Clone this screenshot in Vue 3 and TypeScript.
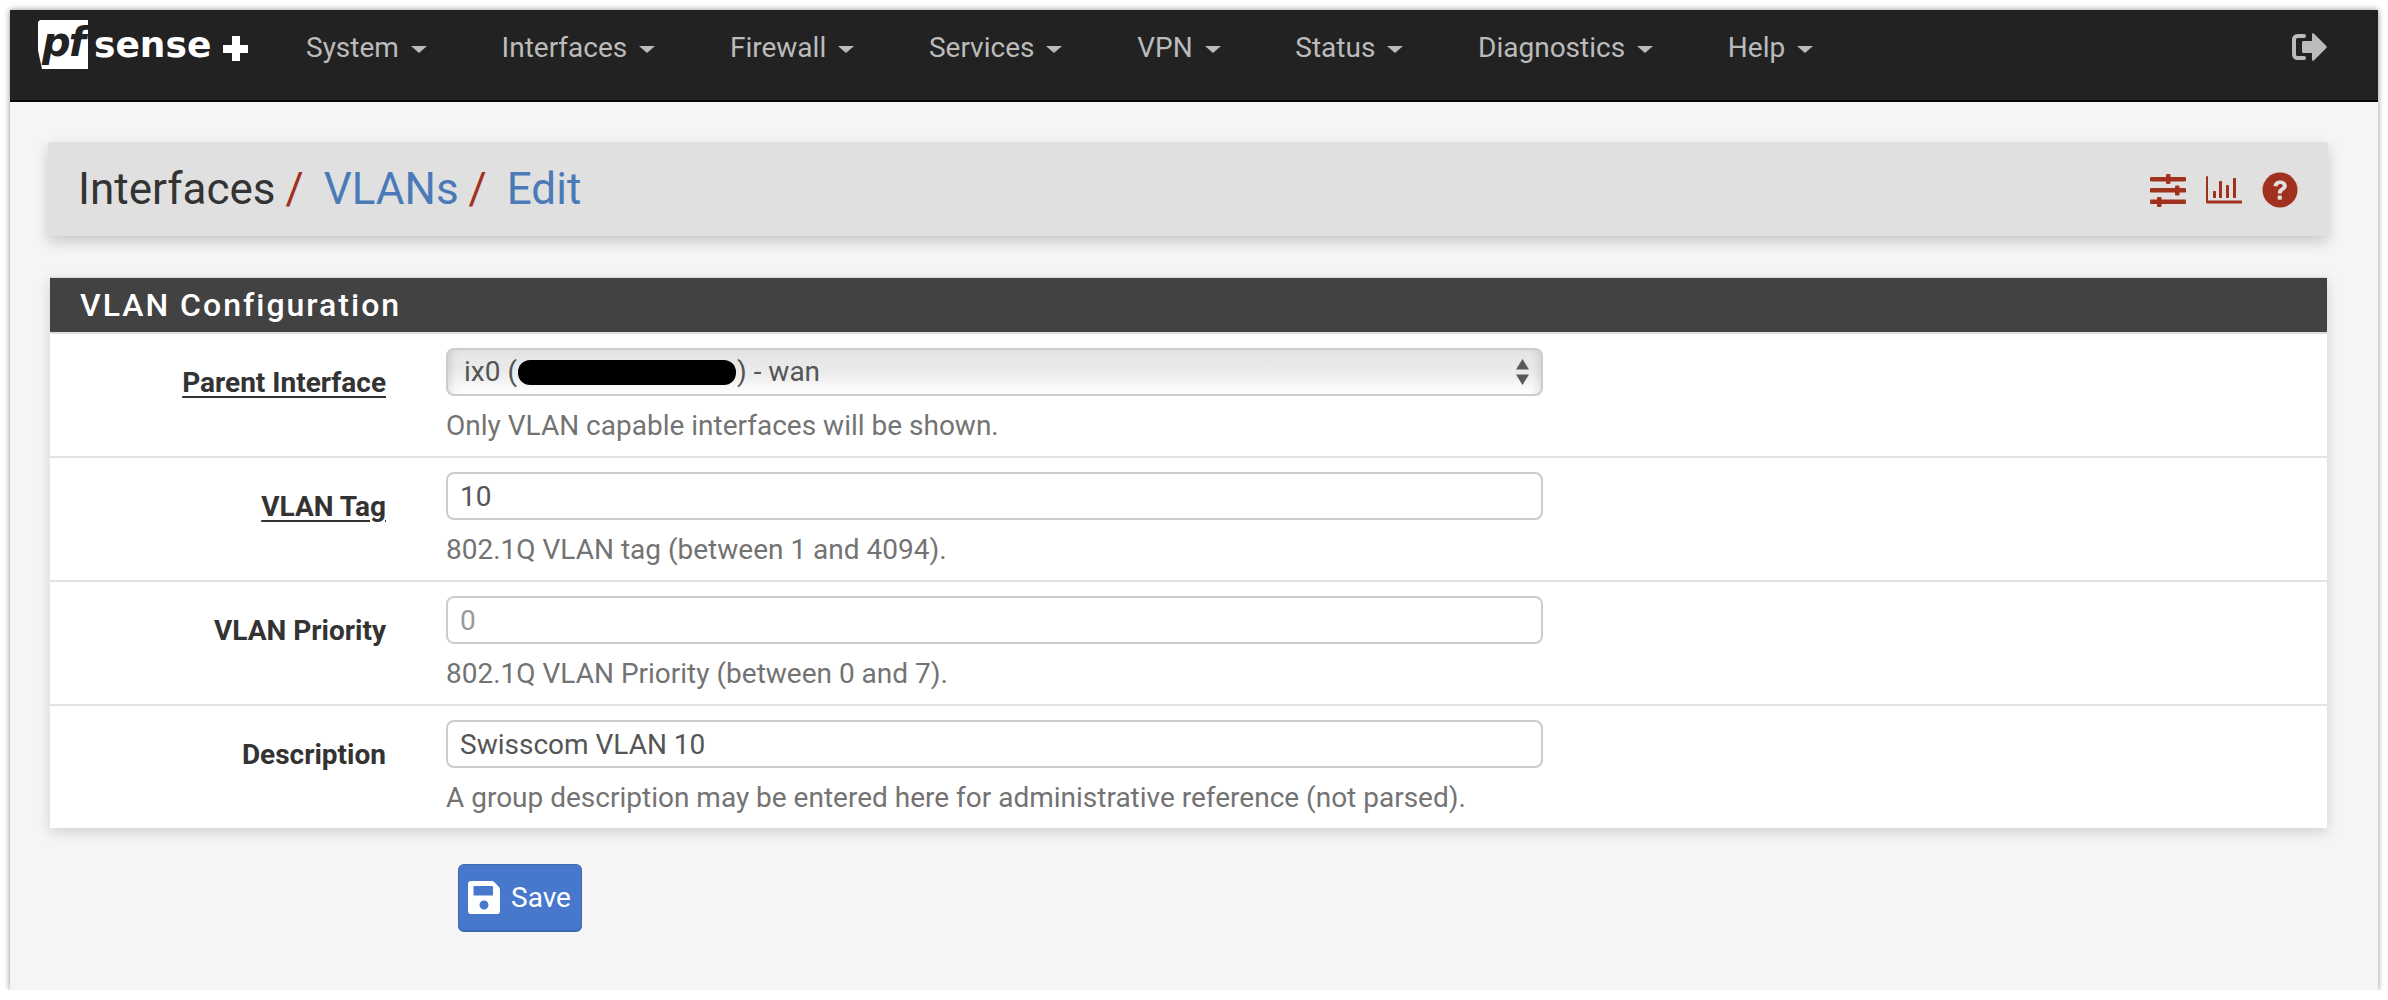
<script setup lang="ts">
interface Row {
  label: string
  underline: boolean
  help: string
  value?: string
  placeholder?: string
  isSelect?: boolean
}

const menu = ['System', 'Interfaces', 'Firewall', 'Services', 'VPN', 'Status', 'Diagnostics', 'Help']

const rows: Row[] = [
  { label: 'Parent Interface', underline: true, isSelect: true, help: 'Only VLAN capable interfaces will be shown.' },
  { label: 'VLAN Tag', underline: true, value: '10', help: '802.1Q VLAN tag (between 1 and 4094).' },
  { label: 'VLAN Priority', underline: false, placeholder: '0', help: '802.1Q VLAN Priority (between 0 and 7).' },
  {
    label: 'Description',
    underline: false,
    value: 'Swisscom VLAN 10',
    help: 'A group description may be entered here for administrative reference (not parsed).'
  }
]
</script>

<template>
  <div class="window">
    <nav class="navbar">
      <a class="logo" href="#" aria-label="pfSense Plus">
        <span class="logo-box"><span class="logo-pf">pf</span></span>
        <span class="logo-sense">sense</span>
        <span class="logo-plus" aria-hidden="true"></span>
      </a>
      <ul class="menu">
        <li v-for="item in menu" :key="item" class="menu-item">
          {{ item }}<span class="caret"></span>
        </li>
      </ul>
      <svg class="logout" viewBox="0 0 36 28" aria-label="Logout">
        <path d="M13 3H6.500A3.500 3.500 0 0 0 3 6.500v15A3.500 3.500 0 0 0 6.500 25H13" fill="none" stroke="#bbb" stroke-width="4" stroke-linecap="round" />
        <path d="M21 1.200c0-1 1-1.400 1.800-.7L35.300 13a1.400 1.400 0 0 1 0 2L22.800 27.500c-.8.700-1.800.3-1.800-.7V20h-8.500A1.500 1.500 0 0 1 11 18.500v-9A1.500 1.500 0 0 1 12.500 8H21z" fill="#bbb" />
      </svg>
    </nav>

    <main class="content">
      <header class="crumbs">
        <h1 class="crumb-title">
          <span>Interfaces</span><span class="sep">/</span>
          <a href="#">VLANs</a><span class="sep">/</span>
          <a href="#">Edit</a>
        </h1>
        <div class="crumb-icons">
          <svg class="ic-sliders" viewBox="0 0 36 33" aria-label="Settings">
            <g fill="#a1301f">
              <rect y="3" width="36" height="4.500" rx="1.200" />
              <rect y="14" width="36" height="4.500" rx="1.200" />
              <rect y="25.500" width="36" height="4.500" rx="1.200" />
              <rect x="16" width="4.500" height="10" rx="1.200" />
              <rect x="25" y="11.500" width="4.500" height="10" rx="1.200" />
              <rect x="7" y="23" width="4.500" height="10" rx="1.200" />
            </g>
          </svg>
          <svg class="ic-chart" viewBox="0 0 36 28" aria-label="Status">
            <g fill="#a1301f">
              <path d="M0 1a1 1 0 0 1 2 0v23.500h33a1.500 1.500 0 0 1 0 3H1.500A1.500 1.500 0 0 1 0 26z" />
              <rect x="7" y="15" width="3" height="7" rx=".6" />
              <rect x="13" y="5" width="3" height="17" rx=".6" />
              <rect x="20" y="9" width="3" height="13" rx=".6" />
              <rect x="27" y="2" width="3" height="20" rx=".6" />
            </g>
          </svg>
          <svg class="ic-help" viewBox="0 0 36 36" aria-label="Help">
            <circle cx="18" cy="18" r="17.500" fill="#a1301f" />
            <path d="M11.500 14c.3-3.600 3-5.600 6.700-5.600 3.800 0 6.600 2.200 6.600 5.400 0 2.500-1.500 3.700-3.100 4.700-1.300.8-1.900 1.400-1.900 2.900h-4c0-3 1.100-4.300 2.900-5.400 1.200-.7 2-1.300 2-2.200 0-1-1-1.700-2.400-1.700-1.600 0-2.500.9-2.800 2.300z" fill="#e0e0e0" />
            <rect x="15.700" y="23.500" width="4.100" height="4.300" rx=".8" fill="#e0e0e0" />
          </svg>
        </div>
      </header>

      <section class="panel">
        <h2 class="panel-heading">VLAN Configuration</h2>
        <div v-for="row in rows" :key="row.label" class="form-row">
          <label class="form-label" :class="{ required: row.underline }">{{ row.label }}</label>
          <div class="form-field">
            <div v-if="row.isSelect" class="select" role="combobox">
              <span class="select-text">ix0 (<span class="redacted"></span>) - wan</span>
              <svg class="select-arrows" viewBox="0 0 13 26" aria-hidden="true">
                <path d="M6.500 0 13 10.500H0zM0 15.500h13L6.500 26z" fill="#595959" />
              </svg>
            </div>
            <input v-else class="input" type="text" :value="row.value" :placeholder="row.placeholder" />
            <p class="help">{{ row.help }}</p>
          </div>
        </div>
      </section>

      <div class="actions">
        <button class="btn-save" type="button">
          <svg class="ic-save" viewBox="0 0 32 33" aria-hidden="true">
            <path fill-rule="evenodd" fill="#fff" d="M3 0h20.500c1 0 2 .4 2.700 1.100l4.700 5c.7.700 1.100 1.700 1.100 2.700V30a3 3 0 0 1-3 3H3a3 3 0 0 1-3-3V3a3 3 0 0 1 3-3zm2.500 5v9.500h19.500V6c0-.6-.4-1-1-1zM16 19.500a4.500 4.500 0 1 0 0 9 4.500 4.500 0 0 0 0-9z" />
          </svg>
          Save
        </button>
      </div>
    </main>
  </div>
</template>

<style>
html, body { background: #fff; }
</style>

<style scoped>
.window {
  box-sizing: border-box;
  width: 2368px;
  height: 980px;
  margin: 10px 0 0 10px;
  background: #f5f5f5;
  box-shadow: 0 0 6px rgba(0, 0, 0, .45);
  font-family: Roboto, "Liberation Sans", sans-serif;
  color: #333;
}
.navbar {
  box-sizing: border-box;
  height: 92px;
  display: flex;
  align-items: flex-start;
  background: #222;
  border-bottom: 2px solid #080808;
  padding: 10px 51px 0 28px;
}
.logo {
  display: flex;
  align-items: flex-start;
  width: 268px;
  flex: none;
  color: #fff;
  text-decoration: none;
}
.logo-box {
  width: 50px;
  height: 49px;
  flex: none;
  background: #fff;
  clip-path: polygon(0 4%, 4% 0, 100% 0, 100% 100%, 8% 100%, 0 62%);
  display: flex;
  align-items: center;
}
.logo-pf {
  font: italic 700 40px/40px "DejaVu Sans", sans-serif;
  color: #222;
  margin: -6px 0 0 4px;
  letter-spacing: -2px;
}
.logo-sense {
  font: 700 36px/46px "DejaVu Sans", sans-serif;
  margin: 2px 0 0 6px;
}
.logo-plus {
  width: 25px;
  height: 25px;
  margin: 16px 0 0 12px;
  background:
    linear-gradient(#fff, #fff) center / 100% 8px no-repeat,
    linear-gradient(#fff, #fff) center / 8px 100% no-repeat;
}
.menu {
  display: flex;
  gap: 74.700px;
  list-style: none;
  margin: 0;
  padding: 0;
  flex: 1;
}
.menu-item {
  font-size: 28px;
  line-height: 55px;
  color: #bbb;
  white-space: nowrap;
}
.caret {
  display: inline-block;
  margin-left: 12px;
  vertical-align: middle;
  border-top: 7px solid #bbb;
  border-left: 8px solid transparent;
  border-right: 8px solid transparent;
}
.logout {
  width: 36px;
  height: 28px;
  margin-top: 13px;
  flex: none;
}
.content {
  padding: 40px 50px 0 38px;
}
.crumbs {
  box-sizing: border-box;
  height: 94px;
  display: flex;
  align-items: center;
  justify-content: space-between;
  background: #e0e0e0;
  border-radius: 3px;
  padding: 0 30px 0 30px;
  box-shadow: 0 6px 14px rgba(0, 0, 0, .18);
}
.crumb-title {
  margin: 0;
  font-size: 44px;
  font-weight: 400;
  white-space: nowrap;
}
.crumb-title a {
  color: #4a7ab8;
  text-decoration: none;
}
.sep {
  color: #a1301f;
  margin: 0 20px 0 10px;
}
.crumb-icons {
  display: flex;
  align-items: center;
  gap: 20px;
  margin-top: 2px;
}
.ic-sliders { width: 36px; height: 33px; }
.ic-chart { width: 36px; height: 28px; }
.ic-help { width: 36px; height: 36px; }
.panel {
  margin: 41px 1px 0 2px;
  background: #fff;
  box-shadow: 0 4px 12px rgba(0, 0, 0, .15);
}
.panel-heading {
  box-sizing: border-box;
  height: 57px;
  margin: 0;
  padding: 0 30px;
  background: #424242;
  border-top: 1px solid #d8d8d8;
  border-bottom: 2px solid #ddd;
  color: #fff;
  font-size: 32px;
  font-weight: 500;
  letter-spacing: 2px;
  line-height: 54px;
}
.form-row {
  box-sizing: border-box;
  height: 124px;
  display: grid;
  grid-template-columns: 336px 1097px;
  column-gap: 60px;
  padding-top: 14px;
  border-bottom: 2px solid #e2e2e2;
}
.form-row:last-child {
  height: 122px;
  border-bottom: 0;
}
.form-label {
  justify-self: end;
  align-self: start;
  margin-top: 19px;
  font-size: 28px;
  font-weight: 700;
  line-height: 31px;
}
.form-label.required {
  text-decoration: underline;
  text-underline-offset: 4px;
}
.select,
.input {
  box-sizing: border-box;
  display: flex;
  align-items: center;
  width: 100%;
  height: 48px;
  border: 2px solid #ccc;
  border-radius: 8px;
  font: 28px Roboto, sans-serif;
  color: #555;
  padding: 0 12px;
  outline: none;
}
.select {
  justify-content: space-between;
  padding-left: 16px;
  background: linear-gradient(#e4e4e4, #ececec 55%, #fff);
  box-shadow: inset -8px 0 8px -6px rgba(0, 0, 0, .12), inset 8px 0 8px -6px rgba(0, 0, 0, .12);
}
.select-text {
  margin-top: -2px;
}
.input::placeholder {
  color: #999;
  opacity: 1;
}
.redacted {
  display: inline-block;
  width: 218px;
  height: 25px;
  margin: 0 1px;
  border-radius: 12px;
  background: #000;
  vertical-align: -4px;
}
.select-arrows {
  width: 13px;
  height: 26px;
  flex: none;
}
.help {
  margin: 15px 0 0;
  font-size: 28px;
  line-height: 30px;
  color: #737373;
  white-space: nowrap;
}
.actions {
  padding: 36px 0 0 410px;
}
.btn-save {
  box-sizing: border-box;
  display: flex;
  align-items: center;
  gap: 11px;
  width: 124px;
  height: 68px;
  padding: 0 0 0 9px;
  border: 1px solid #3f69ad;
  border-bottom-width: 2px;
  border-radius: 6px;
  background: #4878cc;
  color: #fff;
  font: 28px Roboto, sans-serif;
}
.ic-save { width: 32px; height: 33px; flex: none; }
</style>
